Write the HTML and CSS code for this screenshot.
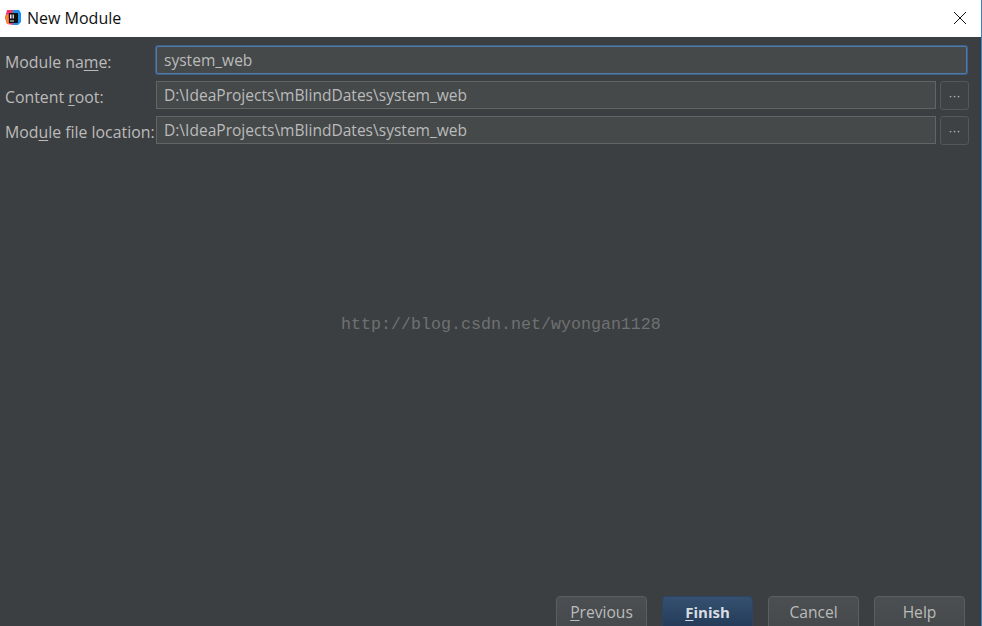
FILE: index.html
```html
<!DOCTYPE html>
<html lang="en">
<head>
<meta charset="utf-8">
<title>New Module</title>
<link rel="stylesheet" href="styles.css">
</head>
<body>
<div class="window">
  <header class="titlebar">
    <svg class="app-icon" width="16" height="16" viewBox="0 0 16 16" aria-hidden="true">
      <path d="M2 0 L8 0 L8 15 L2 14 L0 8 Z" fill="#f0386b"/>
      <path d="M0 6 L3 4 L4 14 L2 14 Z" fill="#f58a2c"/>
      <path d="M8 0 L14 0 L16 3 L16 12 L13 15 L8 15 Z" fill="#1c8fef"/>
      <rect x="4" y="3" width="9" height="10" fill="#111"/>
      <rect x="5" y="4.500" width="1.500" height="4" fill="#eee"/>
      <rect x="7.500" y="4.500" width="1.500" height="4" fill="#ccc"/>
      <rect x="5" y="10.500" width="4" height="1" fill="#eee"/>
    </svg>
    <span class="title">New Module</span>
    <svg class="close" width="14" height="14" viewBox="0 0 14 14" aria-hidden="true">
      <path d="M1 1 L13 13 M13 1 L1 13" stroke="#111" stroke-width="1" fill="none"/>
    </svg>
  </header>
  <main class="content">
    <form class="form">
      <label class="label"><span>Module na<u>m</u>e:</span></label>
      <div class="field field-wide focused">system_web</div>
      <label class="label"><span>Content <u>r</u>oot:</span></label>
      <div class="field">D:\IdeaProjects\mBlindDates\system_web</div>
      <button type="button" class="browse">···</button>
      <label class="label"><span>Mod<u>u</u>le file location:</span></label>
      <div class="field">D:\IdeaProjects\mBlindDates\system_web</div>
      <button type="button" class="browse">···</button>
    </form>
    <div class="watermark">http://blog.csdn.net/wyongan1128</div>
    <div class="actions">
      <button type="button" class="btn"><u>P</u>revious</button>
      <button type="button" class="btn primary"><u>F</u>inish</button>
      <button type="button" class="btn">Cancel</button>
      <button type="button" class="btn">Help</button>
    </div>
  </main>
</div>
</body>
</html>
```
FILE: styles.css
```css
* { box-sizing: border-box; }
html, body { margin: 0; padding: 0; }
body { width: 982px; height: 626px; overflow: hidden; font-family: "Open Sans", "Noto Sans", sans-serif; }
.window { width: 982px; height: 626px; display: flex; flex-direction: column; overflow: hidden; border-right: 1px solid #3f84c8; }
.titlebar { height: 37px; flex: none; background: #fff; display: flex; align-items: center; padding: 0 14px 0 5px; }
.app-icon { flex: none; margin-top: -1px; }
.title { margin-left: 6px; font-size: 16px; color: #111; flex: 1; margin-top: -1px; }
.close { flex: none; margin-top: -1px; }
.content { flex: 1; min-height: 0; background: #3c3f41; display: flex; flex-direction: column; padding: 9px 0 0 5px; }
.form { display: grid; grid-template-columns: 151px 780px 33px; row-gap: 7px; flex: none; }
.label { font-size: 15.85px; color: #bbbbbb; display: flex; align-items: center; white-space: nowrap; height: 28px; padding-top: 3px; }
.label u { text-underline-offset: 2px; }
.field { height: 28px; background: #45494a; border: 1px solid #646464; color: #bbbbbb; font-size: 15.55px; line-height: 26px; padding: 0 7px; white-space: nowrap; }
.field-wide { grid-column: 2 / 4; width: 811px; }
.focused { border: 1px solid #4f7cab; box-shadow: 0 0 0 1px #3d6085; border-radius: 2px; }
.browse { width: 29px; height: 29px; margin-left: 4px; margin-bottom: -1px; background: #3e4244; border: 1px solid #555859; border-radius: 3px; color: #c8c8c8; font: 12px "Liberation Sans", sans-serif; padding: 0; }
.watermark { flex: 1; min-height: 0; font: 16.67px "Liberation Mono", monospace; color: #6f7171; padding: 171px 0 0 336px; }
.actions { flex: none; height: 30px; display: flex; justify-content: flex-end; gap: 15px; padding-right: 16px; }
.btn { width: 91px; height: 34px; flex: none; border: 1px solid #5b5f61; border-radius: 4px; background: linear-gradient(#4b4f51, #45494b); color: #bbbbbb; font: 15.6px "Open Sans", "Noto Sans", sans-serif; padding: 0 0 3px; }
.btn u { text-underline-offset: 2px; }
.primary { background: linear-gradient(#355070, #233a58); border-color: #2c4564; color: #d8dde2; font-size: 15px; font-weight: 700; }
```
